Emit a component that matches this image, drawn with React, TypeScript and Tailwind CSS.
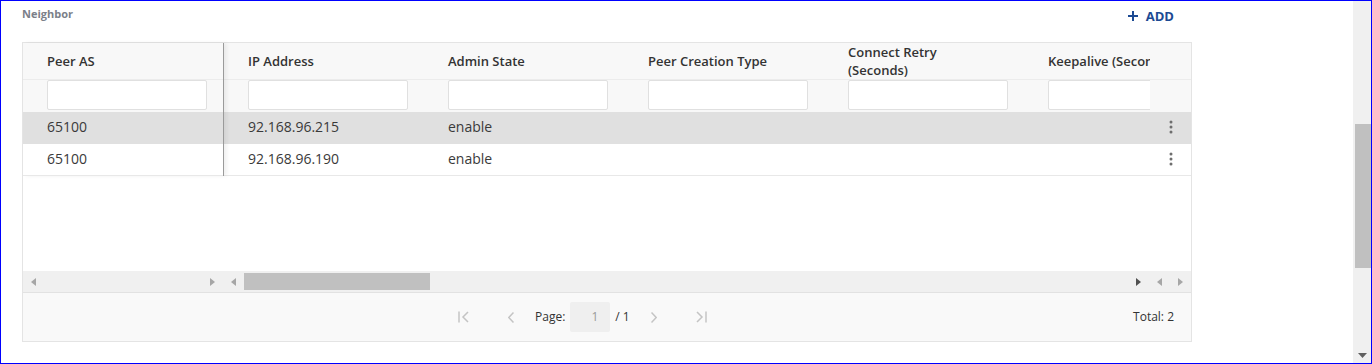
import React from "react";

const font = { fontFamily: '"Open Sans", "Noto Sans", sans-serif' };

function Tri({ dir, color }: { dir: "l" | "r"; color: string }) {
  return (
    <svg width="5" height="8" viewBox="0 0 5 8" className="block">
      {dir === "l" ? (
        <polygon points="5,0 5,8 0,4" fill={color} />
      ) : (
        <polygon points="0,0 0,8 5,4" fill={color} />
      )}
    </svg>
  );
}

function Kebab() {
  return (
    <svg width="4" height="14" viewBox="0 0 4 14" className="block">
      <circle cx="2" cy="2" r="1.5" fill="#6e6e6e" />
      <circle cx="2" cy="7" r="1.5" fill="#6e6e6e" />
      <circle cx="2" cy="12" r="1.5" fill="#6e6e6e" />
    </svg>
  );
}

const cols = [
  { label: "IP Address" },
  { label: "Admin State" },
  { label: "Peer Creation Type" },
  { label: "Connect Retry", sub: "(Seconds)" },
  { label: "Keepalive (Seconds)" },
];

const rows = [
  { as: "65100", ip: "92.168.96.215", state: "enable", sel: true },
  { as: "65100", ip: "92.168.96.190", state: "enable", sel: false },
];

function Header({ label, sub }: { label: string; sub?: string }) {
  return (
    <div className="w-[200px] shrink-0 h-[36px] pl-[24px] flex items-center text-[13px] font-semibold text-[#333] leading-[18px] whitespace-nowrap">
      {sub ? (
        <div>
          <div>{label}</div>
          <div>{sub}</div>
        </div>
      ) : (
        <span>{label}</span>
      )}
    </div>
  );
}

function Filter() {
  return (
    <div className="w-[200px] shrink-0 h-[32px] pl-[24px]">
      <div className="w-[160px] h-[30px] bg-white border border-[#e0e0e0] rounded-[2px]" />
    </div>
  );
}

function Cell({ text }: { text: string }) {
  return (
    <div className="w-[200px] shrink-0 h-[32px] pl-[24px] pb-[3px] flex items-center text-[14px] text-[#3a3a3a] whitespace-nowrap">
      {text}
    </div>
  );
}

export default function App() {
  return (
    <div className="w-[1372px] h-[364px] border border-[#0000ff] flex bg-white overflow-hidden" style={font}>
      <div className="flex-1 pl-[21px]">
        <div className="w-[1170px] h-[41px] flex justify-between items-start">
          <div className="pt-[5px] text-[11px] font-bold text-[#7b8089]">Neighbor</div>
          <div className="pt-[6px] pr-[18px] flex items-center gap-[8px] text-[13px] font-bold text-[#1c4a93] leading-[18px]">
            <svg width="10" height="10" viewBox="0 0 10 10" className="block">
              <line x1="0" y1="5" x2="10" y2="5" stroke="#1c4a93" strokeWidth="2" />
              <line x1="5" y1="0" x2="5" y2="10" stroke="#1c4a93" strokeWidth="2" />
            </svg>
            <span>ADD</span>
          </div>
        </div>

        <div className="w-[1170px] h-[300px] border border-[#e4e4e4] flex flex-col">
          {/* body */}
          <div className="h-[228px] flex items-start bg-white">
            {/* left pinned */}
            <div className="w-[201px] shrink-0 border-r border-[#9a9a9a] shadow-[3px_0_4px_rgba(0,0,0,0.06)] relative z-10">
              <div className="bg-[#f8f8f8] border-b border-[#ececec]">
                <Header label="Peer AS" />
              </div>
              <div className="bg-[#f8f8f8]">
                <Filter />
              </div>
              {rows.map((r, i) => (
                <div key={i} className={r.sel ? "bg-[#e0e0e0]" : "bg-white border-b border-[#e8e8e8] h-[32px]"}>
                  <Cell text={r.as} />
                </div>
              ))}
            </div>
            {/* center viewport */}
            <div className="w-[926px] shrink-0 overflow-hidden">
              <div className="flex bg-[#f8f8f8] border-b border-[#ececec] w-max">
                {cols.map((c) => (
                  <Header key={c.label} label={c.label} sub={c.sub} />
                ))}
              </div>
              <div className="flex bg-[#f8f8f8] w-max">
                {cols.map((c) => (
                  <Filter key={c.label} />
                ))}
              </div>
              {rows.map((r, i) => (
                <div key={i} className={"flex w-max " + (r.sel ? "bg-[#e0e0e0]" : "bg-white border-b border-[#e8e8e8] h-[32px]")}>
                  <Cell text={r.ip} />
                  <Cell text={r.state} />
                  <Cell text="" />
                  <Cell text="" />
                  <Cell text="" />
                </div>
              ))}
            </div>
            {/* right pinned actions */}
            <div className="flex-1">
              <div className="h-[37px] bg-[#f8f8f8] border-b border-[#ececec]" />
              <div className="h-[32px] bg-[#f8f8f8]" />
              {rows.map((r, i) => (
                <div
                  key={i}
                  className={"h-[32px] flex items-center justify-center pb-[2px] " + (r.sel ? "bg-[#e0e0e0]" : "bg-white border-b border-[#e8e8e8]")}
                >
                  <Kebab />
                </div>
              ))}
            </div>
          </div>

          {/* horizontal scrollbars */}
          <div className="h-[21px] bg-[#f0f0f0] flex items-center border-b border-[#e2e2e2] box-content">
            <div className="w-[201px] shrink-0 flex items-center justify-between pl-[8px] pr-[9px]">
              <Tri dir="l" color="#a6a6a6" />
              <Tri dir="r" color="#a6a6a6" />
            </div>
            <div className="w-[926px] shrink-0 flex items-center pl-[7px] pr-[9px]">
              <Tri dir="l" color="#a6a6a6" />
              <div className="ml-[8px] w-[186px] h-[17px] bg-[#c0c0c0]" />
              <div className="flex-1" />
              <Tri dir="r" color="#505050" />
            </div>
            <div className="flex-1 flex items-center pl-[7px] gap-[16px]">
              <Tri dir="l" color="#a6a6a6" />
              <Tri dir="r" color="#a6a6a6" />
            </div>
          </div>

          {/* footer */}
          <div className="flex-1 bg-[#f9f9f9] flex items-center text-[12px] text-[#333]">
            <div className="w-[425px] shrink-0" />
            <div className="w-[32px] flex justify-center">
              <svg width="12" height="12" viewBox="0 0 12 12" className="block">
                <line x1="1" y1="0.5" x2="1" y2="11.5" stroke="#c4c4c4" strokeWidth="1.5" />
                <polyline points="10,1 5,6 10,11" fill="none" stroke="#c4c4c4" strokeWidth="1.5" />
              </svg>
            </div>
            <div className="ml-[15px] w-[32px] flex justify-center">
              <svg width="6" height="11" viewBox="0 0 6 11" className="block">
                <polyline points="5.5,0.5 0.8,5.5 5.5,10.5" fill="none" stroke="#c4c4c4" strokeWidth="1.5" />
              </svg>
            </div>
            <span className="ml-[8px]">Page:</span>
            <div className="ml-[5px] w-[40px] h-[30px] bg-[#efefef] rounded-[2px] flex items-center justify-end pr-[12px] text-[#9a9a9a]">
              1
            </div>
            <span className="ml-[5px]">/ 1</span>
            <div className="ml-[8px] w-[32px] flex justify-center">
              <svg width="6" height="11" viewBox="0 0 6 11" className="block">
                <polyline points="0.5,0.5 5.2,5.5 0.5,10.5" fill="none" stroke="#c4c4c4" strokeWidth="1.5" />
              </svg>
            </div>
            <div className="ml-[15px] w-[32px] flex justify-center">
              <svg width="12" height="12" viewBox="0 0 12 12" className="block">
                <polyline points="2,1 7,6 2,11" fill="none" stroke="#c4c4c4" strokeWidth="1.5" />
                <line x1="11" y1="0.5" x2="11" y2="11.5" stroke="#c4c4c4" strokeWidth="1.5" />
              </svg>
            </div>
            <div className="flex-1" />
            <span className="pr-[17px]">Total: 2</span>
          </div>
        </div>
      </div>

      {/* vertical scrollbar */}
      <div className="w-[18px] h-full bg-[#f0f0f0] flex flex-col items-end pt-[123px]">
        <div className="w-[16px] h-[144px] bg-[#c0c0c0]" />
        <div className="flex-1" />
        <div className="w-[18px] flex justify-center pb-[5px]">
          <svg width="9" height="5" viewBox="0 0 9 5" className="block">
            <polygon points="0,0 9,0 4.5,5" fill="#606060" />
          </svg>
        </div>
      </div>
    </div>
  );
}
